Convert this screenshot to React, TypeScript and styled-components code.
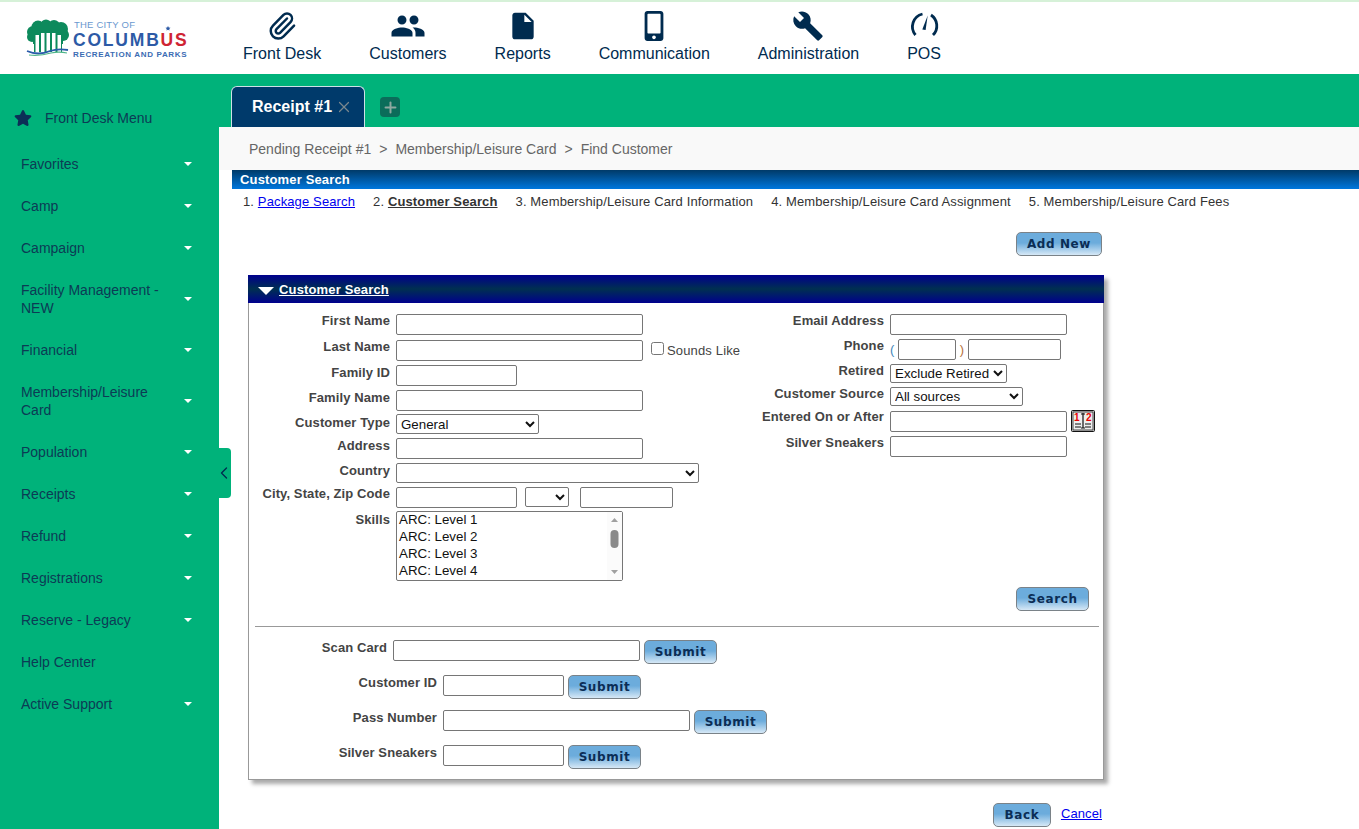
import React from "react";
import styled, { createGlobalStyle } from "styled-components";
import { Paperclip, X, Plus, ChevronLeft } from "lucide-react";
import { FaStar, FaMobileAlt } from "react-icons/fa";
import { MdPeople, MdBuild, MdInsertDriveFile } from "react-icons/md";

const Global = createGlobalStyle`
  html, body { margin: 0; padding: 0; background: #fff; }
  body { font-family: "Liberation Sans", Arial, sans-serif; width: 1359px; height: 829px; overflow: hidden; }
`;

const navy = "#002b4f";
const green = "#00b27a";

const Page = styled.div`
  display: grid;
  grid-template-columns: 219px 1140px;
  grid-template-rows: 74px 755px;
  width: 1359px;
  height: 829px;
  overflow: hidden;
  position: relative;
`;
const Header = styled.header`
  grid-column: 1 / 3;
  border-top: 2px solid #d6f1d8;
  box-sizing: border-box;
  display: flex;
  background: #fff;
`;
const LogoSlot = styled.div`
  width: 243px;
  flex: none;
  padding: 16px 0 0 26px;
  box-sizing: border-box;
`;
const Nav = styled.nav`
  display: flex;
  gap: 48px;
`;
const NavItem = styled.a`
  display: flex;
  flex-direction: column;
  align-items: center;
  color: ${navy};
  font-size: 16px;
  line-height: 18px;
`;
const NavIcon = styled.span`
  height: 28px;
  margin: 10px 0 5px;
  display: flex;
  align-items: center;
  justify-content: center;
  color: ${navy};
`;
const Sidebar = styled.aside`
  background: ${green};
  padding-top: 31px;
`;
const MenuTitle = styled.div`
  display: flex;
  align-items: center;
  height: 26px;
  padding-left: 14px;
  gap: 13px;
  margin-bottom: 12px;
  font-size: 14px;
  color: #0c3b55;
`;
const SideItem = styled.div`
  display: flex;
  align-items: center;
  min-height: 42px;
  padding: 12px 27px 12px 21px;
  font-size: 14px;
  line-height: 18px;
  color: #0c3b55;
  box-sizing: border-box;
  span { flex: 1; max-width: 145px; margin-right: auto; }
`;
const Caret = styled.i`
  flex: none;
  margin-left: auto;
  width: 0;
  height: 0;
  border-left: 4px solid transparent;
  border-right: 4px solid transparent;
  border-top: 4px solid #fff;
`;
const Handle = styled.div`
  position: absolute;
  left: 219px;
  top: 448px;
  width: 12px;
  height: 50px;
  background: ${green};
  border-radius: 0 4px 4px 0;
  display: flex;
  align-items: center;
  justify-content: center;
  color: ${navy};
  svg { flex: none; margin-left: -2px; }
`;
const Main = styled.main`
  display: flex;
  flex-direction: column;
  min-width: 0;
`;
const TabBar = styled.div`
  height: 53px;
  background: ${green};
  display: flex;
  align-items: flex-end;
  padding-left: 12px;
  box-sizing: border-box;
`;
const Tab = styled.div`
  width: 134px;
  height: 41px;
  box-sizing: border-box;
  background: #003a6b;
  border: 1px solid #cfe0e6;
  border-bottom: 0;
  border-radius: 6px 6px 0 0;
  color: #fff;
  font-size: 16px;
  font-weight: bold;
  display: flex;
  align-items: center;
  padding: 0 0 0 20px;
  gap: 3px;
  svg { color: #7a878e; flex: none; }
`;
const AddTab = styled.div`
  width: 20px;
  height: 20px;
  margin: 0 0 10px 15px;
  border-radius: 4px;
  background: #0b6d5a;
  color: #8fa8a0;
  display: flex;
  align-items: center;
  justify-content: center;
`;
const Crumbs = styled.div`
  height: 43px;
  background: #f9f9f9;
  padding-left: 30px;
  display: flex;
  align-items: center;
  font-size: 14px;
  color: #666;
  gap: 8px;
`;
const SectionBar = styled.div`
  margin-left: 13px;
  height: 19px;
  background: linear-gradient(#003a68, #0077dd);
  color: #fff;
  font-size: 13px;
  font-weight: bold;
  letter-spacing: 0.15px;
  line-height: 19px;
  padding-left: 8px;
`;
const Steps = styled.div`
  display: flex;
  height: 24px;
  box-sizing: border-box;
  padding-top: 1px;
  align-items: center;
  margin-left: 24px;
  gap: 18px;
  font-size: 13px;
  letter-spacing: 0.13px;
  color: #333;
`;
const StepLink = styled.a`
  color: #0000ee;
  text-decoration: underline;
`;
const StepCurrent = styled.b`
  text-decoration: underline;
`;
const ActionRow = styled.div`
  display: flex;
  justify-content: flex-end;
  padding-right: 257px;
  margin-top: 19px;
`;
const Btn = styled.button<{ $w: number }>`
  width: ${(p) => p.$w}px;
  height: 24px;
  box-sizing: border-box;
  flex: none;
  padding: 0;
  border: 1px solid #7a8288;
  border-radius: 5px;
  background: linear-gradient(#6cacdc 0%, #6cacdc 45%, #d6e8f6 100%);
  color: #0b2d55;
  font-family: "DejaVu Sans", Verdana, sans-serif;
  font-size: 12px;
  font-weight: bold;
  letter-spacing: 0.6px;
`;
const Panel = styled.section`
  margin: 19px 0 0 29px;
  width: 856px;
  height: 505px;
  box-sizing: border-box;
  border: 1px solid #999;
  border-top: 0;
  box-shadow: 4px 4px 4px #aaa;
`;
const PanelHead = styled.div`
  margin: 0 -1px;
  height: 28px;
  display: flex;
  align-items: center;
  padding-left: 10px;
  gap: 5px;
  background: linear-gradient(#00008e, #003050 50%, #00008e);
  color: #fff;
  font-size: 13px;
  font-weight: bold;
  letter-spacing: 0.15px;
  text-decoration: underline;
`;
const Arrow = styled.i`
  width: 0;
  height: 0;
  margin-top: 3px;
  border-left: 8px solid transparent;
  border-right: 8px solid transparent;
  border-top: 8px solid #fff;
`;
const Columns = styled.div`
  display: grid;
  grid-template-columns: 506px 1fr;
  padding-top: 11px;
  height: 299px;
  box-sizing: border-box;
`;
const FormGrid = styled.div<{ $labels: number; $rows: string }>`
  display: grid;
  grid-template-columns: ${(p) => p.$labels}px 1fr;
  grid-template-rows: ${(p) => p.$rows};
  column-gap: 6px;
  align-content: start;
`;
const Label = styled.label<{ $dy?: number }>`
  text-align: right;
  font-size: 13px;
  font-weight: bold;
  letter-spacing: 0.1px;
  color: #444;
  line-height: 14px;
  white-space: nowrap;
  margin-top: ${(p) => p.$dy ?? 0}px;
`;
const Field = styled.div`
  display: flex;
  align-items: flex-start;
`;
const TextBox = styled.input<{ $w: number }>`
  width: ${(p) => p.$w}px;
  height: 21px;
  box-sizing: border-box;
  border: 1px solid #767676;
  border-radius: 2px;
  padding: 1px 2px;
  flex: none;
  background: #fff;
`;
const Dropdown = styled.select<{ $w: number; $h?: number }>`
  width: ${(p) => p.$w}px;
  height: ${(p) => p.$h ?? 20}px;
  box-sizing: border-box;
  border: 1px solid #767676;
  border-radius: 2px;
  background: #fff;
  font-family: "Liberation Sans", Arial, sans-serif;
  font-size: 13.33px;
  color: #111;
  flex: none;
`;
const ListBox = styled.select`
  width: 227px;
  height: 70px;
  box-sizing: border-box;
  border: 1px solid #767676;
  border-radius: 2px;
  font-family: "Liberation Sans", Arial, sans-serif;
  font-size: 13.33px;
  color: #111;
  padding: 0;
  overflow: hidden;
  option { padding: 0 2px; min-height: 17px; line-height: 17px; }
`;
const ListWrap = styled.div`
  position: relative;
  width: 227px;
  height: 70px;
`;
const Track = styled.div`
  position: absolute;
  right: 1px;
  top: 1px;
  bottom: 1px;
  width: 15px;
  background: #fbfbfb;
  svg { display: block; }
`;
const Sounds = styled.label`
  display: flex;
  align-items: flex-start;
  margin: 2px 0 0 8px;
  font-size: 13px;
  letter-spacing: 0.15px;
  color: #444;
  gap: 3px;
  input { width: 13px; height: 13px; margin: 0; }
  span { margin-top: 1px; }
`;
const Paren = styled.span<{ $c: string }>`
  width: 8px;
  color: ${(p) => p.$c};
  font-size: 13px;
  line-height: 22px;
`;
const CloseParen = styled(Paren)`
  width: 12px;
  text-align: center;
`;
const Cal = styled.span`
  display: block;
  margin: -1px 0 0 4px;
  line-height: 0;
`;
const SearchRow = styled.div`
  display: flex;
  justify-content: flex-end;
  padding-right: 14px;
  height: 39px;
  box-sizing: border-box;
  margin-top: -15px;
`;
const Rule = styled.hr`
  margin: 0 4px 1px 6px;
  border: 0;
  border-top: 1px solid #999;
  height: 0;
`;
const SubmitList = styled.div`
  display: flex;
  flex-direction: column;
  gap: 11px;
  padding-top: 12px;
`;
const SubmitRow = styled.div<{ $labelEnd: number }>`
  display: flex;
  align-items: flex-start;
  gap: 4px;
  label { width: ${(p) => p.$labelEnd}px; margin-right: 2px; margin-top: 1px; flex: none; }
`;
const Footer = styled.div`
  margin-top: 23px;
  display: flex;
  justify-content: flex-end;
  align-items: center;
  gap: 10px;
  padding-right: 257px;
`;
const CancelLink = styled.a`
  color: #0000ee;
  font-size: 13px;
  letter-spacing: 0.1px;
  text-decoration: underline;
  margin-top: -4px;
`;

const Logo = () => (
  <svg width="164" height="42" viewBox="0 0 164 42">
    <g fill="#0d8a5c">
      <circle cx="7" cy="14" r="6" /><circle cx="12" cy="9" r="6.500" /><circle cx="20" cy="7" r="5.500" />
      <circle cx="28" cy="8" r="6" /><circle cx="35" cy="11" r="7" /><circle cx="37" cy="17" r="6" />
      <circle cx="6" cy="19" r="5" /><rect x="7" y="8" width="30" height="26" />
    </g>
    <g fill="#fff">
      <rect x="9.500" y="17" width="3.500" height="18" /><rect x="15" y="15" width="3.500" height="20" />
      <rect x="20.500" y="15" width="3.500" height="20" /><rect x="26" y="15" width="3.500" height="20" />
      <rect x="31.500" y="17" width="3.500" height="18" />
    </g>
    <rect x="0" y="26" width="8" height="12" fill="#fff" />
    <rect x="36" y="26" width="8" height="12" fill="#fff" />
    <path d="M1 33c9 4 16 3 23 0 6-2 12-2 18-1" fill="none" stroke="#2a5caa" strokeWidth="1.800" />
    <path d="M3 37c8 1 15 0 22-2 5-1 11-1 16 0" fill="none" stroke="#4fb58a" strokeWidth="1.200" />
    <text x="48" y="10" fontFamily="Liberation Sans, sans-serif" fontSize="9.500" fill="#6a98cf" letterSpacing="0.2">THE CITY OF</text>
    <text x="47" y="28" fontFamily="Liberation Sans, sans-serif" fontSize="17.500" fontWeight="bold" letterSpacing="1.800">
      <tspan fill="#2d5aa6">COLUMB</tspan><tspan fill="#cf2433">US</tspan>
    </text>
    <text x="47" y="39" fontFamily="Liberation Sans, sans-serif" fontSize="8" fontWeight="bold" fill="#3b6cb3" letterSpacing="0.650">RECREATION AND PARKS</text>
    <path d="M142 8l.8 1.600 1.700.2-1.300 1.100.4 1.700-1.600-.9-1.600.9.4-1.700-1.300-1.100 1.700-.2z" fill="#2d5aa6" />
  </svg>
);

const Gauge = () => (
  <svg width="30" height="28" viewBox="0 0 30 28" fill="none" stroke={navy} strokeWidth="2.800">
    <path d="M6.500 23A13 13 0 0 1 13.500 2" />
    <path d="M22 3A13 13 0 0 1 24 23" />
    <path d="M13.300 17.500L16.600 18L18.700 3.500Z" fill={navy} stroke="none" />
  </svg>
);

const CalIcon = () => (
  <svg width="24" height="22" viewBox="0 0 24 22">
    <rect x="0.500" y="0.500" width="23" height="21" rx="1" fill="#d6d6d6" stroke="#111" />
    <rect x="2" y="2" width="20" height="18" fill="#eee" stroke="#222" strokeWidth="0.800" />
    <text x="3" y="11" fontFamily="Liberation Sans, sans-serif" fontSize="10" fontWeight="bold" fill="#e80000">1</text>
    <text x="15" y="11" fontFamily="Liberation Sans, sans-serif" fontSize="10" fontWeight="bold" fill="#e80000">2</text>
    <path d="M12 3v15M10 4h4M10 18h4M4 14h6M4 17h6M14 14h6M14 17h6" stroke="#111" strokeWidth="1.200" />
  </svg>
);

const navItems: [string, React.ReactNode][] = [
  ["Front Desk", <Paperclip key="a" size={30} strokeWidth={2} />],
  ["Customers", <MdPeople key="b" size={36} />],
  ["Reports", <MdInsertDriveFile key="c" size={32} />],
  ["Communication", <FaMobileAlt key="d" size={30} />],
  ["Administration", <MdBuild key="e" size={32} />],
  ["POS", <Gauge key="f" />],
];

const side: [string, boolean][] = [
  ["Favorites", true],
  ["Camp", true],
  ["Campaign", true],
  ["Facility Management - NEW", true],
  ["Financial", true],
  ["Membership/Leisure Card", true],
  ["Population", true],
  ["Receipts", true],
  ["Refund", true],
  ["Registrations", true],
  ["Reserve - Legacy", true],
  ["Help Center", false],
  ["Active Support", true],
];

const submits: [string, number, number][] = [
  ["Scan Card", 138, 247],
  ["Customer ID", 188, 121],
  ["Pass Number", 188, 247],
  ["Silver Sneakers", 188, 121],
];

export default function App() {
  return (
    <Page>
      <Global />
      <Header>
        <LogoSlot><Logo /></LogoSlot>
        <Nav>
          {navItems.map(([t, i]) => (
            <NavItem key={t}>
              <NavIcon>{i}</NavIcon>
              {t}
            </NavItem>
          ))}
        </Nav>
      </Header>
      <Sidebar>
        <MenuTitle>
          <FaStar size={18} color="#0c2f57" />
          Front Desk Menu
        </MenuTitle>
        {side.map(([t, c]) => (
          <SideItem key={t}>
            <span>{t}</span>
            {c && <Caret />}
          </SideItem>
        ))}
      </Sidebar>
      <Handle><ChevronLeft size={20} strokeWidth={1.6} /></Handle>
      <Main>
        <TabBar>
          <Tab>Receipt #1 <X size={18} strokeWidth={1.6} /></Tab>
          <AddTab><Plus size={17} strokeWidth={2.8} /></AddTab>
        </TabBar>
        <Crumbs>
          <span>Pending Receipt #1</span><span>&gt;</span>
          <span>Membership/Leisure Card</span><span>&gt;</span>
          <span>Find Customer</span>
        </Crumbs>
        <SectionBar>Customer Search</SectionBar>
        <Steps>
          <span>1. <StepLink>Package Search</StepLink></span>
          <span>2. <StepCurrent>Customer Search</StepCurrent></span>
          <span>3. Membership/Leisure Card Information</span>
          <span>4. Membership/Leisure Card Assignment</span>
          <span>5. Membership/Leisure Card Fees</span>
        </Steps>
        <ActionRow>
          <Btn $w={86}>Add New</Btn>
        </ActionRow>
        <Panel>
          <PanelHead><Arrow />Customer Search</PanelHead>
          <Columns>
            <FormGrid $labels={141} $rows="26px 25px 25px 24px 24px 25px 24px 24px 70px">
              <Label>First Name</Label><Field><TextBox $w={247} /></Field>
              <Label>Last Name</Label>
              <Field>
                <TextBox $w={247} />
                <Sounds><input type="checkbox" /><span>Sounds Like</span></Sounds>
              </Field>
              <Label $dy={1}>Family ID</Label><Field><TextBox $w={121} /></Field>
              <Label $dy={1}>Family Name</Label><Field><TextBox $w={247} /></Field>
              <Label $dy={2}>Customer Type</Label>
              <Field><Dropdown $w={143}><option>General</option></Dropdown></Field>
              <Label $dy={1}>Address</Label><Field><TextBox $w={247} /></Field>
              <Label $dy={1}>Country</Label><Field><Dropdown $w={303}><option></option></Dropdown></Field>
              <Label>City, State, Zip Code</Label>
              <Field>
                <TextBox $w={121} />
                <Dropdown $w={44} style={{ marginLeft: 8 }}><option></option></Dropdown>
                <TextBox $w={93} style={{ marginLeft: 11 }} />
              </Field>
              <Label $dy={2}>Skills</Label>
              <Field>
                <ListWrap>
                  <ListBox multiple size={4}>
                    <option>ARC: Level 1</option>
                    <option>ARC: Level 2</option>
                    <option>ARC: Level 3</option>
                    <option>ARC: Level 4</option>
                  </ListBox>
                  <Track>
                    <svg width="15" height="68" viewBox="0 0 15 68">
                      <path d="M4 10l3.500-4 3.500 4z" fill="#a0a0a0" />
                      <rect x="3.500" y="18" width="8" height="18" rx="4" fill="#8a8a8a" />
                      <path d="M4 58l3.500 4 3.500-4z" fill="#a0a0a0" />
                    </svg>
                  </Track>
                </ListWrap>
              </Field>
            </FormGrid>
            <FormGrid $labels={129} $rows="25px 25px 23px 24px 25px 24px">
              <Label>Email Address</Label><Field><TextBox $w={177} /></Field>
              <Label>Phone</Label>
              <Field>
                <Paren $c="#3f86b8">(</Paren>
                <TextBox $w={58} />
                <CloseParen $c="#b5703a">)</CloseParen>
                <TextBox $w={93} />
              </Field>
              <Label>Retired</Label><Field><Dropdown $w={117} $h={19}><option>Exclude Retired</option></Dropdown></Field>
              <Label>Customer Source</Label><Field><Dropdown $w={133} $h={19}><option>All sources</option></Dropdown></Field>
              <Label $dy={-1}>Entered On or After</Label>
              <Field><TextBox $w={177} /><Cal><CalIcon /></Cal></Field>
              <Label>Silver Sneakers</Label><Field><TextBox $w={177} /></Field>
            </FormGrid>
          </Columns>
          <SearchRow><Btn $w={73}>Search</Btn></SearchRow>
          <Rule />
          <SubmitList>
            {submits.map(([t, l, w]) => (
              <SubmitRow key={t} $labelEnd={l}>
                <Label>{t}</Label>
                <TextBox $w={w} />
                <Btn $w={73}>Submit</Btn>
              </SubmitRow>
            ))}
          </SubmitList>
        </Panel>
        <Footer>
          <Btn $w={58}>Back</Btn>
          <CancelLink>Cancel</CancelLink>
        </Footer>
      </Main>
    </Page>
  );
}
